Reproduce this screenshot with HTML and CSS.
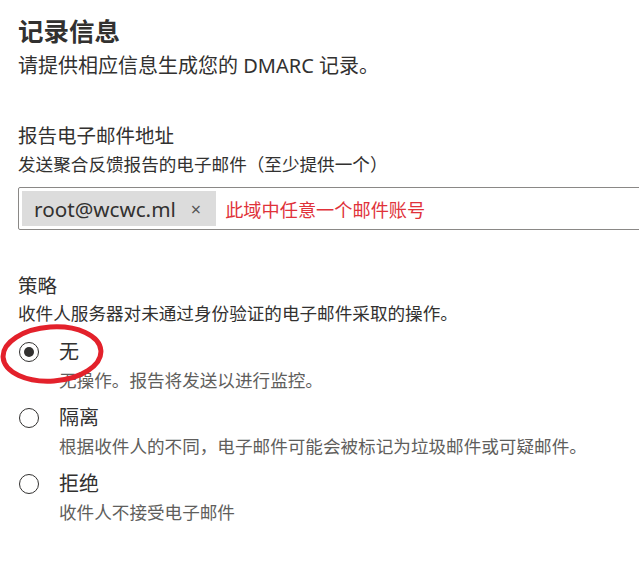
FILE: index.html
```html
<!DOCTYPE html>
<html lang="zh-CN">
<head>
<meta charset="utf-8">
<title>记录信息</title>
<link rel="stylesheet" href="styles.css">
</head>
<body>
<div class="page">
  <h1 class="title">记录信息</h1>
  <p class="subtitle">请提供相应信息生成您的 DMARC 记录。</p>

  <div class="field field-email">
    <div class="label">报告电子邮件地址</div>
    <div class="desc">发送聚合反馈报告的电子邮件（至少提供一个）</div>
    <div class="tag-input">
      <span class="chip"><span class="chip-text">root@wcwc.ml</span><span class="chip-x">×</span></span>
      <span class="note">此域中任意一个邮件账号</span>
    </div>
  </div>

  <div class="field field-policy">
    <div class="label">策略</div>
    <div class="desc">收件人服务器对未通过身份验证的电子邮件采取的操作。</div>
    <div class="radios">
      <div class="radio-item">
        <span class="radio checked"></span>
        <div class="radio-body">
          <div class="radio-label">无</div>
          <div class="radio-desc">无操作。报告将发送以进行监控。</div>
        </div>
        <svg class="mark" width="110" height="70" viewBox="0 0 110 70">
          <ellipse cx="52" cy="34" rx="49" ry="27" transform="rotate(-4 52 34)" fill="none" stroke="#e3212b" stroke-width="5"/>
        </svg>
      </div>
      <div class="radio-item">
        <span class="radio"></span>
        <div class="radio-body">
          <div class="radio-label">隔离</div>
          <div class="radio-desc">根据收件人的不同，电子邮件可能会被标记为垃圾邮件或可疑邮件。</div>
        </div>
      </div>
      <div class="radio-item">
        <span class="radio"></span>
        <div class="radio-body">
          <div class="radio-label">拒绝</div>
          <div class="radio-desc">收件人不接受电子邮件</div>
        </div>
      </div>
    </div>
  </div>
</div>
</body>
</html>
```
FILE: styles.css
```css
html, body {
  margin: 0;
  padding: 0;
  background: #ffffff;
  overflow: hidden;
}
body {
  font-family: "Noto Sans", "Noto Sans CJK SC", sans-serif;
  color: #323130;
}
.page {
  padding: 15px 0 0 18px;
}
.title {
  margin: 0;
  font-size: 25.5px;
  line-height: 32px;
  font-weight: 700;
  color: #323130;
}
.subtitle {
  margin: 6px 0 0;
  font-size: 20px;
  line-height: 26px;
  color: #323130;
}
.field-email {
  margin-top: 43px;
}
.field-policy {
  margin-top: 42px;
}
.label {
  font-size: 19.5px;
  line-height: 28px;
  color: #323130;
}
.field-email .desc {
  font-size: 17.6px;
  line-height: 28px;
  color: #323130;
}
.field-policy .desc {
  font-size: 17.6px;
  line-height: 26px;
  color: #323130;
}
.tag-input {
  margin-top: 9px;
  width: 680px;
  height: 43px;
  box-sizing: border-box;
  border: 1px solid #8a8886;
  border-radius: 2px;
  padding: 3px;
  display: flex;
  align-items: center;
}
.chip {
  display: flex;
  align-items: center;
  height: 35px;
  background: #dcdcdc;
  padding: 0 15px 0 12px;
}
.chip-text {
  font-size: 20.7px;
  color: #323130;
}
.chip-x {
  margin-left: 15px;
  font-size: 18px;
  color: #555;
}
.note {
  margin-left: 9px;
  font-size: 18.2px;
  color: #e0323a;
}
.radios {
  margin-top: 12px;
  display: flex;
  flex-direction: column;
  gap: 10px;
}
.radio-item {
  position: relative;
  display: flex;
  align-items: flex-start;
  gap: 20px;
}
.radio {
  flex: none;
  width: 20px;
  height: 20px;
  box-sizing: border-box;
  border: 1px solid #323130;
  border-radius: 50%;
  margin-top: 4px;
  margin-left: 1px;
  position: relative;
}
.radio.checked::after {
  content: "";
  position: absolute;
  left: 4px;
  top: 4px;
  width: 10px;
  height: 10px;
  border-radius: 50%;
  background: #323130;
}
.radio-label {
  font-size: 20px;
  line-height: 28px;
  color: #323130;
}
.radio-desc {
  font-size: 17.6px;
  line-height: 28px;
  color: #605e5c;
}
.mark {
  position: absolute;
  left: -18px;
  top: -18px;
}
```
